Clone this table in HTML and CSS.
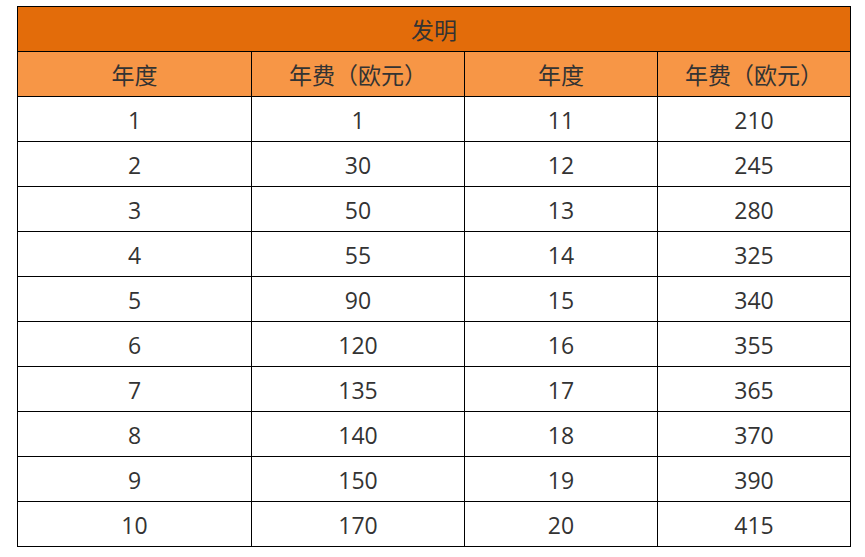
FILE: index.html
```html
<!DOCTYPE html>
<html lang="zh">
<head>
<meta charset="utf-8">
<title>发明</title>
<link rel="stylesheet" href="styles.css">
</head>
<body>
<table class="fees">
  <colgroup>
    <col class="c1"><col class="c2"><col class="c3"><col class="c4">
  </colgroup>
  <thead>
    <tr class="title"><th colspan="4">发明</th></tr>
    <tr class="head"><th>年度</th><th>年费（欧元）</th><th>年度</th><th>年费（欧元）</th></tr>
  </thead>
  <tbody>
    <tr><td>1</td><td>1</td><td>11</td><td>210</td></tr>
    <tr><td>2</td><td>30</td><td>12</td><td>245</td></tr>
    <tr><td>3</td><td>50</td><td>13</td><td>280</td></tr>
    <tr><td>4</td><td>55</td><td>14</td><td>325</td></tr>
    <tr><td>5</td><td>90</td><td>15</td><td>340</td></tr>
    <tr><td>6</td><td>120</td><td>16</td><td>355</td></tr>
    <tr><td>7</td><td>135</td><td>17</td><td>365</td></tr>
    <tr><td>8</td><td>140</td><td>18</td><td>370</td></tr>
    <tr><td>9</td><td>150</td><td>19</td><td>390</td></tr>
    <tr><td>10</td><td>170</td><td>20</td><td>415</td></tr>
  </tbody>
</table>
</body>
</html>
```
FILE: styles.css
```css
html, body {
  margin: 0;
  padding: 0;
  background: #ffffff;
}
body {
  padding: 6px 0 0 17px;
}
.fees {
  border-collapse: collapse;
  table-layout: fixed;
  width: 834px;
  font-family: "Open Sans", "Noto Sans CJK SC", sans-serif;
  font-size: 23px;
  color: #333333;
}
.c1 { width: 234px; }
.c2 { width: 213px; }
.c3 { width: 193px; }
.c4 { width: 193px; }
.fees th, .fees td {
  border: 1px solid #000000;
  height: 45px;
  padding: 2px 0 0 0;
  box-sizing: border-box;
  text-align: center;
  vertical-align: middle;
  font-weight: normal;
  line-height: 1;
}
.title th {
  background: #e36c0a;
}
.head th {
  background: #f79646;
}
```
